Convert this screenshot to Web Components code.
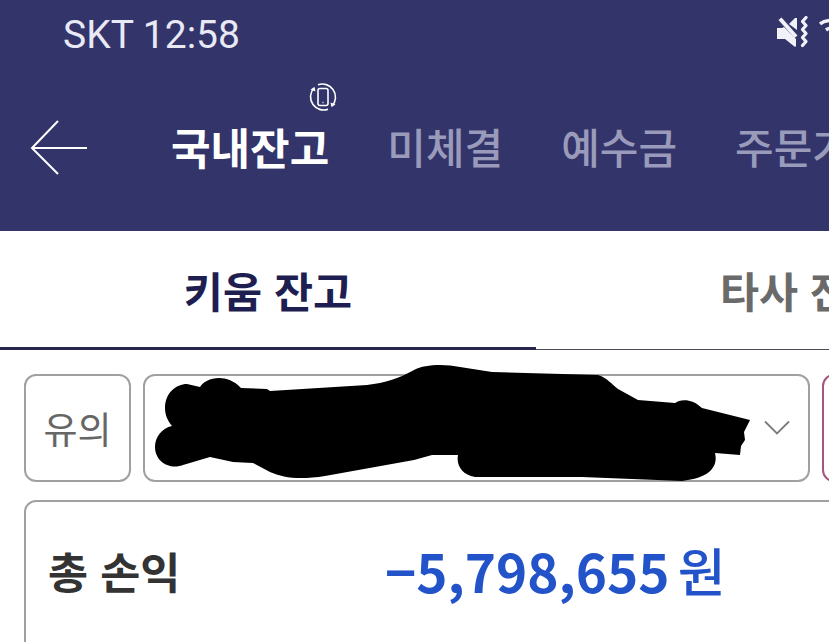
<!DOCTYPE html>
<html lang="ko">
<head>
<meta charset="utf-8">
<title>국내잔고</title>
<style>
  html, body { margin: 0; height: 100%; overflow: hidden; background: #fff; }
  body { font-family: Roboto, "Noto Sans CJK KR", sans-serif; }
</style>
</head>
<body>
<balance-screen></balance-screen>

<script>
const KR = `"Noto Sans CJK KR", "Noto Sans", sans-serif`

customElements.define('status-bar', class extends HTMLElement {
  constructor() {
    super()
    this.attachShadow({ mode: 'open' }).innerHTML = `
      <style>
        :host { display: flex; align-items: center; height: 70px; padding-left: 63px; color: #e9e9f5; font: 400 39px/1 Roboto, sans-serif; white-space: nowrap; }
        .icons { margin-left: auto; display: flex; align-items: center; gap: 10px; margin-right: -22px; margin-bottom: 6px; }
        svg { display: block; }
      </style>
      <span>SKT 12:58</span>
      <span class="icons">
        <svg width="32" height="32" viewBox="0 0 32 32" fill="#f1f1fa">
          <path d="M0 12h5l2-1 12 12v7l-1 1-10-8H0z"/>
          <path d="M1.500 4l3-2.500 16 18-3 2.500z"/>
          <path d="M12 8l6-6h2v12z"/>
          <path d="M29 1.500l-3.500 4 3.500 4-3.500 4 3.500 4-3.500 4 3.500 4-3.500 4" fill="none" stroke="#f1f1fa" stroke-width="3.200" stroke-linejoin="round" stroke-linecap="round"/>
        </svg>
        <svg width="32" height="32" viewBox="0 0 32 32" fill="none" stroke="#f1f1fa" stroke-width="3.500">
          <path d="M1 8c6-5 20-5 28 0M7 14c4-3 14-3 18 0"/>
        </svg>
      </span>
    `
  }
})

customElements.define('top-nav', class extends HTMLElement {
  constructor() {
    super()
    this.attachShadow({ mode: 'open' }).innerHTML = `
      <style>
        :host { display: flex; align-items: center; height: 161px; box-sizing: border-box; padding: 0 0 0 30px; position: relative; white-space: nowrap; font-family: ${KR}; }
        .back { flex: none; display: block; margin-bottom: 6px; }
        nav { display: flex; align-items: center; gap: 58px; margin-left: 83px; margin-bottom: 9px; }
        a { font-size: 42px; line-height: 1; font-weight: 500; color: #9a9bbb; }
        a.on { font-size: 43px; color: #fff; font-weight: 700; }
        .rotate { position: absolute; left: 308px; top: 12px; }
      </style>
      <svg class="back" width="58" height="56" viewBox="0 0 58 56" fill="none" stroke="#fff" stroke-width="2">
        <path d="M28 1L2 28l26 26M2 28h55"/>
      </svg>
      <nav>
        <a class="on">국내잔고</a>
        <a>미체결</a>
        <a>예수금</a>
        <a>주문가능</a>
      </nav>
      <svg class="rotate" width="30" height="30" viewBox="0 0 30 30" fill="none" stroke="#fff" stroke-width="1.600">
        <rect x="10" y="6.500" width="10" height="17" rx="2"/>
        <path d="M14.500 20.500h1"/>
        <path d="M5 22.500A13 13 0 0 1 6 6M10 2.800A13 13 0 0 1 25 7.500M25 7.500A13 13 0 0 1 24 24M20 27.200A13 13 0 0 1 5 22.500" />
        <path d="M2.500 7.500L6.500 5l1 4.500z" fill="#fff" stroke="none"/>
        <path d="M27.500 22.500L23.500 25l-1-4.500z" fill="#fff" stroke="none"/>
      </svg>
    `
  }
})

customElements.define('sub-tabs', class extends HTMLElement {
  constructor() {
    super()
    this.attachShadow({ mode: 'open' }).innerHTML = `
      <style>
        :host { display: grid; grid-template-columns: 536px 1fr; height: 119px; box-sizing: border-box; font-family: ${KR}; white-space: nowrap; overflow: hidden; }
        div { display: flex; align-items: center; box-sizing: border-box; font-size: 42.500px; font-weight: 700; }
        .on { justify-content: center; color: #1e1e50; border-bottom: 3px solid #26264f; }
        .off { color: #6a6a6a; padding-left: 184px; border-bottom: 1px solid #4a4a58; padding-bottom: 2px; }
      </style>
      <div class="on">키움 잔고</div>
      <div class="off">타사 잔고</div>
    `
  }
})

customElements.define('account-row', class extends HTMLElement {
  constructor() {
    super()
    this.attachShadow({ mode: 'open' }).innerHTML = `
      <style>
        :host { display: flex; gap: 12px; height: 108px; font-family: ${KR}; }
        .box { box-sizing: border-box; height: 108px; border: 2px solid #a0a0a0; border-radius: 12px; background: #fff; flex: none; }
        .note { width: 107px; display: flex; align-items: center; justify-content: center; font-size: 37px; font-weight: 400; color: #666; }
        .select { width: 667px; position: relative; }
        .extra { width: 60px; border-color: #a5557f; }
        .chev { position: absolute; right: 18px; top: 44px; }
        .scribble { position: absolute; left: 0; top: 0; overflow: visible; }
      </style>
      <div class="box note">유의</div>
      <div class="box select">
        <svg class="scribble" width="620" height="120" viewBox="145 376 620 120" fill="#000">
          <path d="M165 408C165 393 176 384 187 384L200 387C205 378 226 372 241 388L267 389L270 391L367 385C385 383 400 378 414 370C425 364 445 364 460 367L492 372L598 375C608 378 612 385 618 389L638 400L675 403C680 399 692 398 702 408L750 420L744 432L745 440L741 446L740 455L715 453C718 465 712 478 682 481L582 477L475 477C462 475 456 465 458 455L432 455L414 460L325 476C300 480 283 478 270 472L253 463L233 462L210 457L183 465C170 470 155 462 155 447C155 437 162 428 172 426C167 420 165 414 165 408Z"/>
        </svg>
        <svg class="chev" width="26" height="16" viewBox="0 0 26 16" fill="none" stroke="#7a7a7a" stroke-width="1.800">
          <path d="M1 1.500l12 12 12-12"/>
        </svg>
      </div>
      <div class="box extra"></div>
    `
  }
})

customElements.define('profit-card', class extends HTMLElement {
  constructor() {
    super()
    this.attachShadow({ mode: 'open' }).innerHTML = `
      <style>
        :host { display: flex; align-items: center; box-sizing: border-box; width: 900px; height: 220px; padding: 0 0 80px 22px; border: 2px solid #a0a0a0; border-radius: 12px; background: #fff; font-family: ${KR}; white-space: nowrap; }
        .label { width: 337px; font-size: 43.500px; font-weight: 700; color: #333; }
        .value { color: #2353c9; font: 700 53px/1 ${KR}; display: flex; align-items: center; gap: 8px; }
        .won { font: 500 52px/1 ${KR}; }
        .next { color: #2353c9; font: 700 26px/1 ${KR}; margin: 3px 0 0 103px; }
      </style>
      <span class="label">총 손익</span>
      <span class="value"><span>−5,798,655</span><span class="won">원</span></span>
      <span class="next">-</span>
    `
  }
})

customElements.define('balance-screen', class extends HTMLElement {
  constructor() {
    super()
    this.attachShadow({ mode: 'open' }).innerHTML = `
      <style>
        :host { display: block; width: 829px; height: 642px; overflow: hidden; }
        header { background: #33346a; }
        .body { display: flex; flex-direction: column; gap: 18px; padding: 24px 0 0 24px; }
      </style>
      <header>
        <status-bar></status-bar>
        <top-nav></top-nav>
      </header>
      <sub-tabs></sub-tabs>
      <div class="body">
        <account-row></account-row>
        <profit-card></profit-card>
      </div>
    `
  }
})
</script>
</body>
</html>
